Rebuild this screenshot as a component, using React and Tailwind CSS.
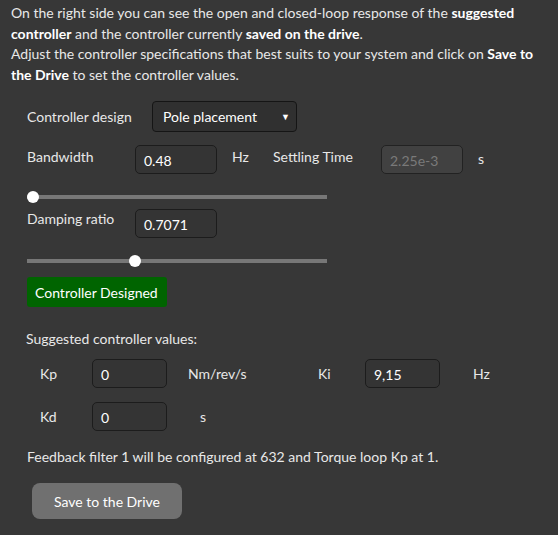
export default function App() {
  const inputCls =
    "h-[29px] rounded-[5px] border border-[#1c1c1c] bg-[#343434] px-2 pt-[5px] text-[14px] leading-[20px] text-white";
  return (
    <div className="w-[558px] h-[535px] overflow-hidden bg-[#373737] text-[#e8e8e8] text-[14px] font-['Segoe_UI','Lato',sans-serif]">
      <div className="pl-[11px] pr-[14px] pt-[3px] leading-[20.5px]">
        On the right side you can see the open and closed-loop response of the{" "}
        <b className="font-bold text-white">suggested</b>{" "}
        <b className="font-bold text-white">controller</b> and the controller currently{" "}
        <b className="font-bold text-white">saved on the drive</b>.
        <br />
        Adjust the controller specifications that best suits to your system and click on{" "}
        <b className="font-bold text-white">Save to</b>{" "}
        <b className="font-bold text-white">the Drive</b> to set the controller values.
      </div>

      <div className="pl-[27px]">
        {/* Controller design */}
        <div className="mt-[16px] flex items-center">
          <span className="w-[125px]">Controller design</span>
          <div className="flex h-[31px] w-[145px] items-center justify-between rounded-[4px] border border-[#151515] bg-[#303030] pl-[10px] pr-[6px] text-white">
            <span>Pole placement</span>
            <span className="text-[9px] leading-none">▼</span>
          </div>
        </div>

        {/* Bandwidth */}
        <div className="mt-[13px] flex items-start h-[29px]">
          <span className="w-[108px] pt-[1px]">Bandwidth</span>
          <div className={inputCls + " w-[82px]"}>0.48</div>
          <span className="ml-[15px] w-[41px] pt-[1px]">Hz</span>
          <span className="w-[108px] pt-[1px]">Settling Time</span>
          <div className="h-[29px] w-[82px] rounded-[5px] border border-[#222] bg-[#414141] px-2 pt-[5px] text-[14px] leading-[20px] text-[#7a7a7a]">
            2.25e-3
          </div>
          <span className="ml-[15px] pt-[3px]">s</span>
        </div>

        {/* Slider 1 */}
        <div className="relative mt-[16px] h-[14px] w-[300px]">
          <div className="absolute left-0 right-0 top-[5px] h-[4px] bg-[#777]" />
          <div className="absolute left-0 top-[1px] h-[12px] w-[12px] rounded-full bg-white" />
        </div>

        {/* Damping ratio */}
        <div className="mt-[5px] flex items-start h-[29px]">
          <span className="w-[108px] -mt-[1px]">Damping ratio</span>
          <div className={inputCls + " w-[82px]"}>0.7071</div>
        </div>

        {/* Slider 2 */}
        <div className="relative mt-[16px] h-[14px] w-[300px]">
          <div className="absolute left-0 right-0 top-[5px] h-[4px] bg-[#777]" />
          <div className="absolute left-[102px] top-[1px] h-[12px] w-[12px] rounded-full bg-white" />
        </div>

        {/* Controller designed */}
        <div className="mt-[9px] inline-flex h-[30px] w-[140px] items-center rounded-[3px] bg-[#006400] pl-[8px] text-white">
          Controller Designed
        </div>

        <div className="mt-[21px] -ml-[1px]">Suggested controller values:</div>

        {/* Kp / Ki */}
        <div className="mt-[10px] flex h-[29px] items-center">
          <span className="ml-[13px] w-[52px]">Kp</span>
          <div className={inputCls + " w-[75px] -mt-[1px]"}>0</div>
          <span className="ml-[21px] w-[130px]">Nm/rev/s</span>
          <span className="w-[47px]">Ki</span>
          <div className={inputCls + " w-[75px] -mt-[1px]"}>9,15</div>
          <span className="ml-[33px]">Hz</span>
        </div>

        {/* Kd */}
        <div className="mt-[14px] flex h-[29px] items-center">
          <span className="ml-[13px] w-[52px]">Kd</span>
          <div className={inputCls + " w-[75px] -mt-[1px]"}>0</div>
          <span className="ml-[33px]">s</span>
        </div>

        <div className="mt-[15px]">Feedback filter 1 will be configured at 632 and Torque loop Kp at 1.</div>

        <button className="ml-[5px] mt-[16px] flex h-[36px] w-[150px] items-center justify-center rounded-[8px] bg-[#707070] text-white">
          Save to the Drive
        </button>
      </div>
    </div>
  );
}
